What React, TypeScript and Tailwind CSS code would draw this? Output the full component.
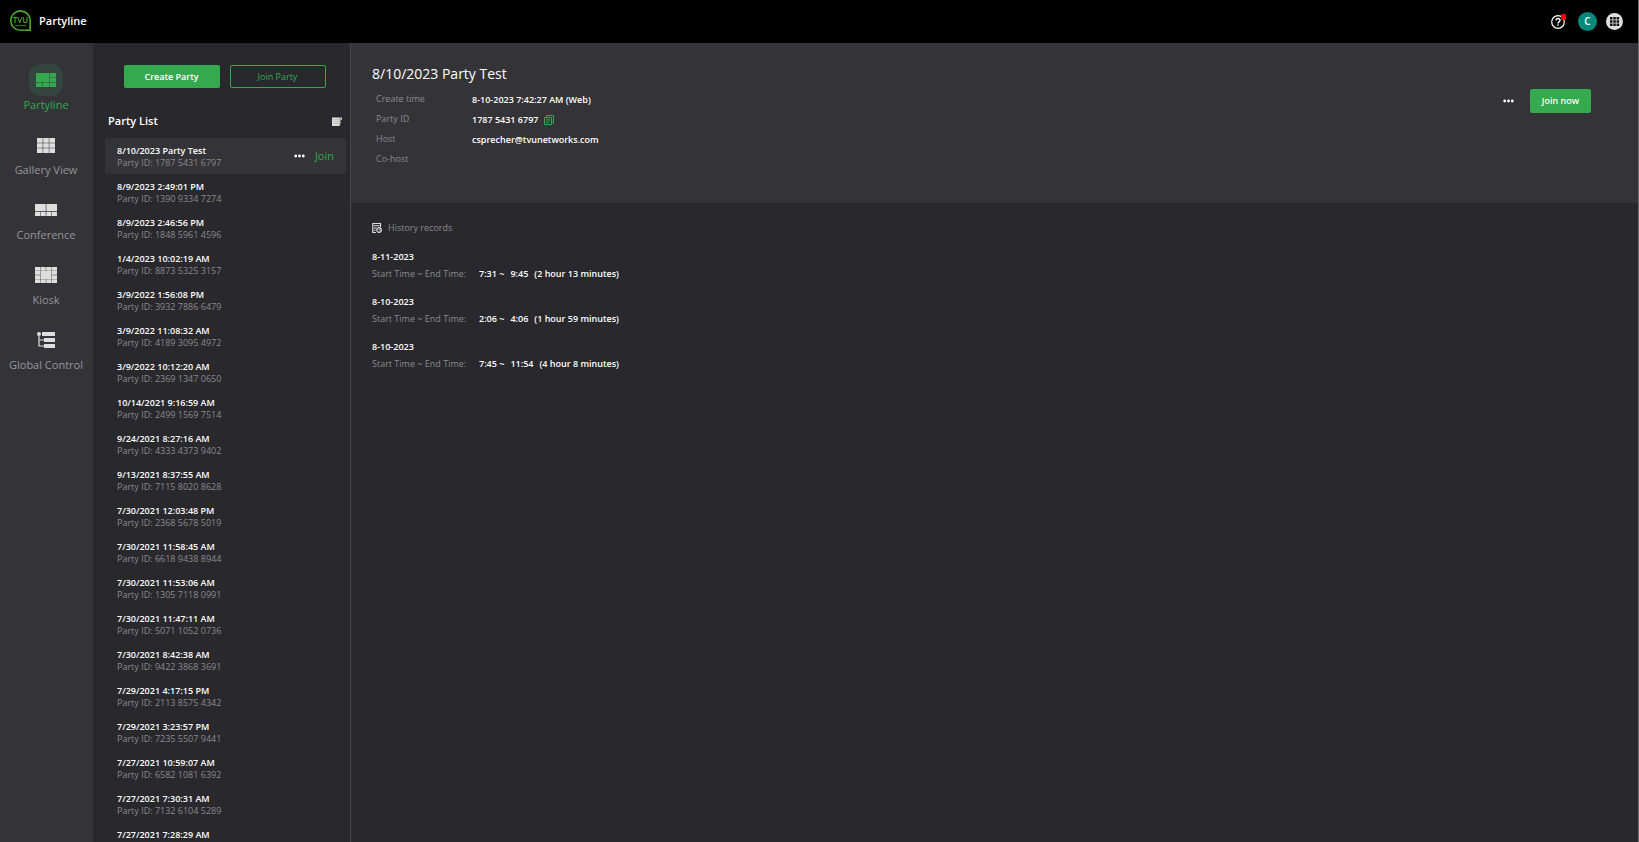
import type { ReactNode } from "react"
import clsx from "clsx"

interface Party {
    title: string;
    id?: string;
}

interface HistoryRecord {
    date: string;
    start: string;
    end: string;
    duration: string;
}

const parties: Party[] = [
    { title: "8/10/2023 Party Test", id: "1787 5431 6797" },
    { title: "8/9/2023 2:49:01 PM", id: "1390 9334 7274" },
    { title: "8/9/2023 2:46:56 PM", id: "1848 5961 4596" },
    { title: "1/4/2023 10:02:19 AM", id: "8873 5325 3157" },
    { title: "3/9/2022 1:56:08 PM", id: "3932 7886 6479" },
    { title: "3/9/2022 11:08:32 AM", id: "4189 3095 4972" },
    { title: "3/9/2022 10:12:20 AM", id: "2369 1347 0650" },
    { title: "10/14/2021 9:16:59 AM", id: "2499 1569 7514" },
    { title: "9/24/2021 8:27:16 AM", id: "4333 4373 9402" },
    { title: "9/13/2021 8:37:55 AM", id: "7115 8020 8628" },
    { title: "7/30/2021 12:03:48 PM", id: "2368 5678 5019" },
    { title: "7/30/2021 11:58:45 AM", id: "6618 9438 8944" },
    { title: "7/30/2021 11:53:06 AM", id: "1305 7118 0991" },
    { title: "7/30/2021 11:47:11 AM", id: "5071 1052 0736" },
    { title: "7/30/2021 8:42:38 AM", id: "9422 3868 3691" },
    { title: "7/29/2021 4:17:15 PM", id: "2113 8575 4342" },
    { title: "7/29/2021 3:23:57 PM", id: "7235 5507 9441" },
    { title: "7/27/2021 10:59:07 AM", id: "6582 1081 6392" },
    { title: "7/27/2021 7:30:31 AM", id: "7132 6104 5289" },
    { title: "7/27/2021 7:28:29 AM" },
];

const history: HistoryRecord[] = [
    { date: "8-11-2023", start: "7:31", end: "9:45", duration: "2 hour 13 minutes" },
    { date: "8-10-2023", start: "2:06", end: "4:06", duration: "1 hour 59 minutes" },
    { date: "8-10-2023", start: "7:45", end: "11:54", duration: "4 hour 8 minutes" },
];

function LogoIcon() {
    return <svg width="22" height="22" viewBox="0 0 22 22" fill="none" aria-hidden="true">
        <path d="M20.2 10.500A9.700 9.700 0 1 0 10.500 20.300h9.700Z" stroke="#4ea72c" strokeWidth="1.600" />
        <path d="M20.900 13v8.100h-8c4-.8 7-3.600 8-8.100Z" fill="#4ea72c" />
        <circle cx="18.400" cy="18.600" r="1.100" fill="#000" />
        <text x="10.500" y="13" textAnchor="middle" fontSize="8" fontWeight="600" fill="#4ea72c">TVU</text>
        <path d="M5 15.500h11" stroke="#2c6318" strokeWidth="1.500" />
    </svg>
}

function PartylineIcon() {
    return <svg width="20" height="14" viewBox="0 0 20 14" fill="currentColor" aria-hidden="true">
        <path d="M0 0h13v9H0zM13.500 0H20v4.300h-6.500zM13.500 4.800H20V9h-6.500zM0 9.500h6.300V14H0zM6.800 9.500H13V14H6.800zM13.500 9.500H20V14h-6.500z" />
    </svg>
}

function GalleryIcon() {
    return <svg width="18" height="15" viewBox="0 0 18 15" fill="currentColor" aria-hidden="true">
        <path d="M0 0h5.700v4.700H0zM6.200 0h5.600v4.700H6.200zM12.300 0H18v4.700h-5.700zM0 5.200h5.700v4.600H0zM6.200 5.200h5.600v4.600H6.200zM12.300 5.200H18v4.600h-5.700zM0 10.300h5.700V15H0zM6.200 10.300h5.600V15H6.200zM12.300 10.300H18V15h-5.700z" />
    </svg>
}

function ConferenceIcon() {
    return <svg width="22" height="12" viewBox="0 0 22 12" fill="currentColor" aria-hidden="true">
        <path d="M0 0h10.700v7H0zM11.300 0H22v7H11.300zM0 7.700h5.100V12H0zM5.600 7.700h5.100V12H5.600zM11.300 7.700h5.100V12h-5.100zM16.900 7.700H22V12h-5.100z" />
    </svg>
}

function KioskIcon() {
    return <svg width="22" height="16" viewBox="0 0 22 16" fill="currentColor" aria-hidden="true">
        <path d="M0 0h5.200v3.700H0zM5.600 0h5.200v3.700H5.600zM11.200 0h5.200v3.700h-5.200zM16.800 0H22v3.700h-5.200zM0 4.100h5.200v3.700H0zM0 8.200h5.200v3.700H0zM16.800 4.100H22v3.700h-5.200zM16.800 8.200H22v3.700h-5.200zM5.600 4.100h10.800v7.800H5.600zM0 12.300h5.200V16H0zM5.600 12.300h5.200V16H5.600zM11.200 12.300h5.200V16h-5.200zM16.800 12.300H22V16h-5.200z" />
    </svg>
}

function GlobalIcon() {
    return <svg width="18" height="16" viewBox="0 0 18 16" fill="currentColor" aria-hidden="true">
        <circle cx="2" cy="2" r="2" />
        <rect x="5" width="13" height="4" rx=".6" />
        <rect x="7" y="6" width="11" height="4" rx=".6" />
        <rect x="7" y="12" width="11" height="4" rx=".6" />
        <path d="M1.400 2h1.200v5.400H7v1.200H2.600v4.800H7v1.200H1.400z" />
    </svg>
}

function ListIcon() {
    return <svg width="10" height="9" viewBox="0 0 10 9" aria-hidden="true">
        <path d="M0 .5h7.800V9H0z" fill="#dedede" />
        <path d="M8.300.5H10v2.300H8.800V7h-.5z" fill="#dedede" />
        <path d="M1 2.700h6M1 4.700h6M1 6.700h6" stroke="#a9a9ac" strokeWidth=".6" />
    </svg>
}

function DotsIcon() {
    return <svg width="11" height="4" viewBox="0 0 11 4" fill="#fff" aria-hidden="true">
        <circle cx="1.700" cy="2" r="1.400" />
        <circle cx="5.500" cy="2" r="1.400" />
        <circle cx="9.300" cy="2" r="1.400" />
    </svg>
}

function CopyIcon() {
    return <svg width="10" height="10" viewBox="0 0 10 10" fill="none" stroke="#34a94e" aria-hidden="true">
        <path d="M2.500 2V.5h7V8H8" />
        <path d="M.5 2.500H7.500v7H.5z" />
        <path d="M2 4.500h4M2 6h4M2 7.500h2.500" strokeWidth=".8" />
    </svg>
}

function HistoryIcon() {
    return <svg width="10" height="10" viewBox="0 0 10 10" fill="none" stroke="#dedede" aria-hidden="true">
        <path d="M8.500 4V.5H.8v9H4" strokeWidth="1.200" />
        <path d="M2 2.700h5.500M2 5h2.500M2 7.200h1.500" />
        <circle cx="7" cy="7" r="2.300" strokeWidth="1.200" />
        <path d="M7 5.700V7.200h1.300" strokeWidth=".8" />
    </svg>
}

function HelpIcon() {
    return <svg width="15" height="15" viewBox="0 0 15 15" fill="none" aria-hidden="true">
        <circle cx="7" cy="8" r="6.300" stroke="#fff" strokeWidth="1.200" />
        <path d="M5 6.500c0-2.700 4-2.500 4-.1 0 1.500-2 1.400-2 3" stroke="#fff" strokeWidth="1.400" />
        <rect x="6.300" y="10.300" width="1.400" height="1.400" fill="#fff" />
        <rect x="10" y="0" width="5" height="6" rx="1.500" fill="#f00" />
    </svg>
}

function AppsIcon() {
    return <svg width="17" height="17" viewBox="0 0 17 17" aria-hidden="true">
        <circle cx="8.500" cy="8.500" r="8.500" fill="#dedede" />
        <path d="M4 4h2.500v2.500H4zM7.300 4h2.500v2.500H7.300zM10.600 4h2.500v2.500h-2.500zM4 7.300h2.500v2.500H4zM7.300 7.300h2.500v2.500H7.300zM10.600 7.300h2.500v2.500h-2.500zM4 10.600h2.500v2.500H4zM7.300 10.600h2.500v2.500H7.300zM10.600 10.600h2.500v2.500h-2.500z" fill="#111" />
    </svg>
}

function NavItem({ icon, label, active }: { icon: ReactNode; label: string; active?: boolean }) {
    return <a href="#" className={clsx(
        "flex h-[65px] flex-col items-center gap-px text-[11px] leading-4",
        active ? "text-[#34a94e]" : "text-[#96969a]"
    )}>
        <span className={clsx(
            "flex h-8 w-[34px] items-center justify-center rounded-xl",
            active ? "bg-[#344540]" : "text-[#dedede]"
        )}>
            {icon}
        </span>
        <span className="whitespace-nowrap">{label}</span>
    </a>
}

function PartyRow({ party, active }: { party: Party; active?: boolean }) {
    return <li className={clsx(
        "flex h-9 shrink-0 items-center rounded-xs px-3",
        active && "bg-[#343338]"
    )}>
        <div className="h-6 flex-1 text-[9px] leading-[13px]">
            <div className="font-semibold text-white">{party.title}</div>
            {party.id && <div className="leading-3 text-[#8b8b8e]">Party ID: {party.id}</div>}
        </div>
        {active && <div className="flex items-center gap-[10px]">
            <button aria-label="More party actions"><DotsIcon /></button>
            <button className="text-[11px] leading-4 text-[#34a94e]">Join</button>
        </div>}
    </li>
}

function DetailRow({ label, children }: { label: string; children?: ReactNode }) {
    return <div className="flex h-5 items-center">
        <dt className="w-24 text-[#8b8b8e]">{label}</dt>
        <dd className="flex items-center gap-[6px] pt-px font-semibold text-white">{children}</dd>
    </div>
}

export default function App() {
    return <div className="flex h-screen flex-col overflow-hidden border-r border-[#6b6b6e] bg-[#29282d] font-['Open_Sans',sans-serif]">
        <header className="flex h-[43px] shrink-0 items-center bg-black pb-px pl-[10px] pr-[15px]">
            <LogoIcon />
            <h1 className="ml-[7px] flex-1 text-[11px] font-semibold leading-4 text-white">Partyline</h1>
            <div className="flex items-center">
                <button aria-label="Help"><HelpIcon /></button>
                <button className="ml-3 h-[19px] w-[19px] rounded-full bg-[#04897b] text-[10px] font-semibold leading-4 text-white">C</button>
                <button className="ml-[9px]" aria-label="Apps"><AppsIcon /></button>
            </div>
        </header>

        <div className="flex min-h-0 flex-1">
            <nav className="w-[93px] shrink-0 bg-[#343338] pr-px pt-[21px]">
                <NavItem icon={<PartylineIcon />} label="Partyline" active />
                <NavItem icon={<GalleryIcon />} label="Gallery View" />
                <NavItem icon={<ConferenceIcon />} label="Conference" />
                <NavItem icon={<KioskIcon />} label="Kiosk" />
                <NavItem icon={<GlobalIcon />} label="Global Control" />
            </nav>

            <aside className="flex w-[258px] shrink-0 flex-col border-r border-[#47464b] pt-[22px]">
                <div className="flex justify-center gap-[10px] pl-[6px] text-[9px] leading-3">
                    <button className="h-[23px] w-24 rounded-xs bg-[#34a94e] font-semibold text-white">Create Party</button>
                    <button className="h-[23px] w-24 rounded-xs border border-[#34a94e] text-[#34a94e]">Join Party</button>
                </div>
                <div className="mt-6 flex h-[18px] items-center justify-between pl-[15px] pr-2">
                    <h2 className="text-[11px] font-semibold leading-4 text-white">Party List</h2>
                    <button aria-label="Sort parties"><ListIcon /></button>
                </div>
                <ul className="mt-2 flex min-h-0 flex-1 flex-col overflow-hidden pl-3 pr-1">
                    {parties.map((party, i) => <PartyRow key={party.title} party={party} active={i === 0} />)}
                </ul>
            </aside>

            <main className="flex min-w-0 flex-1 flex-col">
                <section className="flex h-[160px] items-start justify-between bg-[#343338] pl-[21px] pr-[47px]">
                    <div className="pt-[21px]">
                        <h2 className="text-[14px] leading-5 text-white">8/10/2023 Party Test</h2>
                        <dl className="mt-[5px] pl-1 text-[9px] leading-3">
                            <DetailRow label="Create time">8-10-2023 7:42:27 AM (Web)</DetailRow>
                            <DetailRow label="Party ID">
                                1787 5431 6797
                                <button aria-label="Copy party ID"><CopyIcon /></button>
                            </DetailRow>
                            <DetailRow label="Host">csprecher@tvunetworks.com</DetailRow>
                            <DetailRow label="Co-host" />
                        </dl>
                    </div>
                    <div className="flex items-center gap-4 pt-[46px]">
                        <button aria-label="More actions"><DotsIcon /></button>
                        <button className="h-6 w-[61px] rounded-xs bg-[#34a94e] text-[9px] font-semibold leading-3 text-white">Join now</button>
                    </div>
                </section>

                <section className="pl-[21px] pt-[19px] text-[9px] leading-3">
                    <h3 className="flex items-center gap-[6px] text-[#8b8b8e]">
                        <HistoryIcon />
                        History records
                    </h3>
                    <ul className="mt-[17px] flex flex-col gap-4">
                        {history.map((record, i) => <li key={i}>
                            <div className="font-semibold text-white">{record.date}</div>
                            <div className="mt-[5px] flex">
                                <span className="w-[107px] text-[#8b8b8e]">Start Time ~ End Time:</span>
                                <span className="flex gap-[6px] font-semibold text-white">
                                    <span>{record.start} ~</span>
                                    <span>{record.end}</span>
                                    <span>({record.duration})</span>
                                </span>
                            </div>
                        </li>)}
                    </ul>
                </section>
            </main>
        </div>
    </div>
}
